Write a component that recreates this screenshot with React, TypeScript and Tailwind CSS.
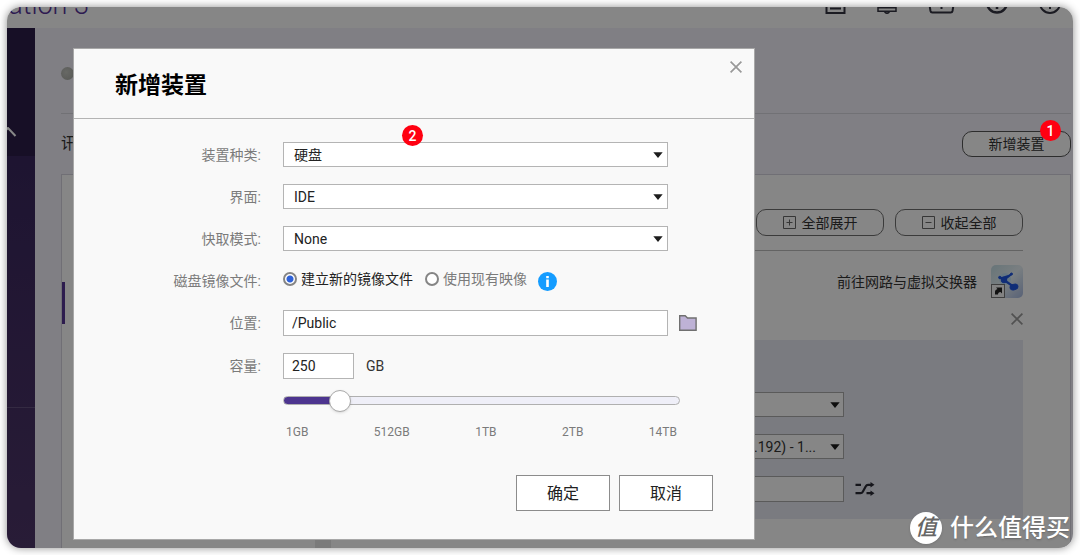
import React, { useState } from 'react';

const Caret: React.FC<{ className?: string }> = ({ className = '' }) => (
  <svg className={`pointer-events-none absolute ${className}`} width="10" height="6" viewBox="0 0 10 6" aria-hidden="true">
    <path d="M0.3 0.3h9.4L5 6z" fill="#1c1c1c" />
  </svg>
);

const CloseIcon: React.FC = () => (
  <svg width="12" height="12" viewBox="0 0 12 12" fill="none" stroke="currentColor" strokeWidth="1.7" aria-hidden="true">
    <path d="M0.6 0.6l10.8 10.8M11.4 0.6L0.6 11.4" />
  </svg>
);

const Badge: React.FC<{ value: number; className: string }> = ({ value, className }) => (
  <span className={`absolute z-10 flex size-[21px] items-center justify-center rounded-full bg-[#ff0011] text-[14px] leading-none font-medium text-white ${className}`}>
    {value}
  </span>
);

interface SelectRowProps {
  id: string;
  label: string;
  options: string[];
}

const SelectRow: React.FC<SelectRowProps> = ({ id, label, options }) => (
  <div className="flex h-[25px] items-center">
    <label htmlFor={id} className="mr-[22px] w-[187px] text-right text-[#7b7b7b]">{label}</label>
    <div className="relative w-[385px]">
      <select id={id} className="block h-[25px] w-full appearance-none border border-[#b4b4b4] bg-white pl-[10px] text-[#222] outline-none">
        {options.map((o) => (
          <option key={o}>{o}</option>
        ))}
      </select>
      <Caret className="top-[10px] right-[5px]" />
    </div>
  </div>
);

const TopBar: React.FC = () => (
  <header className="flex h-[21px] shrink-0 items-end justify-between bg-[#fdfdfd] pr-3">
    <div className="flex w-[82px] justify-end pb-[8px]">
      <h1 className="text-[27px] leading-[30px] font-light whitespace-nowrap text-[#553399]">ation 3</h1>
    </div>
    <div className="flex items-end gap-[31px] pb-[14px] text-[#333340]">
      <svg width="21" height="20" viewBox="0 0 21 20" fill="none" stroke="currentColor" strokeWidth="2">
        <path d="M1.5 1h18v18h-18zM5 6h11M5 10h11M5 14.500h11" />
      </svg>
      <svg width="20" height="20" viewBox="0 0 20 20" fill="none" stroke="currentColor" strokeWidth="1.500">
        <path d="M4 14V8a6 6 0 0 1 12 0v6M1 13.800h18v3.400H1zM7.500 17.500q2.500 3.600 5 0" />
      </svg>
      <svg width="27" height="20" viewBox="0 0 27 20" fill="none" stroke="currentColor" strokeWidth="2">
        <path d="M1 8l1.500 9q.3 1.500 1.800 1.500h18.400q1.500 0 1.800-1.500L26 8zM13.500 9v6" />
      </svg>
      <svg width="22" height="20" viewBox="0 0 22 20" fill="none" stroke="currentColor" strokeWidth="2.500">
        <circle cx="11" cy="8.500" r="10" />
        <path d="M11 9v6" />
      </svg>
      <svg width="22" height="20" viewBox="0 0 22 20" fill="none" stroke="currentColor" strokeWidth="2">
        <circle cx="11" cy="9" r="10" />
        <path d="M11 9v6" />
      </svg>
    </div>
  </header>
);

const NetworkIcon: React.FC = () => (
  <svg width="32" height="33" viewBox="0 0 32 33" aria-hidden="true">
    <defs>
      <linearGradient id="net" x1="0" y1="0" x2="1" y2="1">
        <stop offset="0" stopColor="#c4dce4" />
        <stop offset="0.5" stopColor="#e6f0f4" />
        <stop offset="1" stopColor="#a6b8e0" />
      </linearGradient>
    </defs>
    <rect width="32" height="33" rx="5" fill="url(#net)" />
    <circle cx="14" cy="14" r="6" fill="#c4e2f4" />
    <g stroke="#1f55e0" fill="#1f55e0">
      <path d="M9 12.500l4 2.500 7.500-6M13 15l10 7" strokeWidth="2.200" />
      <circle cx="13" cy="15" r="2.800" />
      <circle cx="20.500" cy="9" r="1" />
      <circle cx="8.800" cy="12.500" r="1.200" />
      <ellipse cx="23" cy="22" rx="4" ry="2.800" transform="rotate(-20 23 22)" />
    </g>
    <rect x="0.500" y="19.500" width="13" height="13" fill="#f6f6f6" stroke="#777" />
    <path d="M4 29.500v-3q0-2 2.500-2.500l-1.500-1.500h6v6l-1.500-1.500Q7 27 7 29.500z" fill="#222" />
  </svg>
);

const Details: React.FC = () => (
  <section className="min-w-0 flex-1 pt-[34px] pr-[47px]">
    <div className="flex justify-end gap-[11px]">
      <button className="flex h-[27px] w-32 items-center justify-center gap-[6px] rounded-[10px] border border-[#707070]">
        <svg width="13" height="13" viewBox="0 0 13 13" fill="none" stroke="#666">
          <path d="M0.500 0.500h12v12h-12zM3.500 6.500h6M6.500 3.500v6" />
        </svg>
        全部展开
      </button>
      <button className="flex h-[27px] w-32 items-center justify-center gap-[6px] rounded-[10px] border border-[#707070]">
        <svg width="13" height="13" viewBox="0 0 13 13" fill="none" stroke="#666">
          <path d="M0.500 0.500h12v12h-12zM3.500 6.500h6" />
        </svg>
        收起全部
      </button>
    </div>
    <div className="mt-[14px] flex items-center justify-end gap-[14px] border-t border-[#bbb] pt-[14px]">
      <a href="#network">前往网路与虚拟交换器</a>
      <NetworkIcon />
    </div>
    <div className="mt-[15px] flex justify-end">
      <button aria-label="移除" className="text-[#999]"><CloseIcon /></button>
    </div>
    <div className="mt-[15px] ml-6 flex flex-col gap-[17px] bg-[#e6e8f1] pt-[52px] pb-[17px] pl-[250px]">
      <div className="relative w-[239px]">
        <select aria-label="网路" className="block h-[25px] w-full appearance-none border border-[#aaa] bg-[#fdfdfd]" />
        <Caret className="top-[10px] right-1" />
      </div>
      <div className="relative w-[239px]">
        <select aria-label="虚拟交换器" className="block h-[25px] w-full appearance-none border border-[#aaa] bg-[#fdfdfd] pr-[27px] text-right">
          <option>.192) - 1...</option>
        </select>
        <Caret className="top-[10px] right-1" />
      </div>
      <div className="flex items-center gap-[11px]">
        <input aria-label="MAC" className="h-[26px] w-[239px] border border-[#aaa] bg-[#fdfdfd]" />
        <button aria-label="随机">
          <svg width="20" height="14" viewBox="0 0 20 14" fill="none" stroke="#2a2a35" strokeWidth="2.200">
            <path d="M0.500 2.800h5.500M0.500 11.200h5q1.500 0 2.300-1.500l3-5.500q.7-1.400 2.200-1.400h4M11.500 11.200h5.500" />
            <path d="M15.500 0v5.600l4-2.800zM15.500 8.400V14l4-2.800z" fill="#2a2a35" stroke="none" />
          </svg>
        </button>
      </div>
    </div>
  </section>
);

const AddDeviceDialog: React.FC = () => {
  const [mode, setMode] = useState('new');
  const [size, setSize] = useState(12);
  const radio =
    'size-[14px] appearance-none rounded-full border-2 border-[#858585] bg-white checked:bg-[radial-gradient(circle,#2f62d8_0_3px,#fff_4px)]';

  return (
    <div role="dialog" aria-labelledby="dialog-title" className="relative w-[682px] border border-[#a8a8a8] bg-[#f9f9f9]">
      <div className="flex h-[70px] items-center border-b border-[#b4b4b4] pl-[41px]">
        <h2 id="dialog-title" className="pt-1 text-[23px] font-bold text-black">新增装置</h2>
        <button aria-label="关闭" className="mr-[12px] mb-[33px] ml-auto text-[#999]"><CloseIcon /></button>
      </div>
      <Badge value={2} className="top-[76px] left-[328px]" />

      <div className="pt-[23px]">
        <div className="flex flex-col gap-[17px]">
          <SelectRow id="kind" label="装置种类:" options={['硬盘']} />
          <SelectRow id="bus" label="界面:" options={['IDE']} />
          <SelectRow id="cache" label="快取模式:" options={['None']} />
        </div>

        <div className="mt-[17px] mb-4 flex h-[26px] items-center">
          <span className="mr-[22px] w-[187px] text-right text-[#7b7b7b]">磁盘镜像文件:</span>
          <label className="mb-1 flex items-center gap-1 text-[#222]">
            <input type="radio" name="image" className={radio} checked={mode === 'new'} onChange={() => setMode('new')} />
            建立新的镜像文件
          </label>
          <label className="mb-1 ml-3 flex items-center gap-1 text-[#7b7b7b]">
            <input type="radio" name="image" className={radio} checked={mode === 'old'} onChange={() => setMode('old')} />
            使用现有映像
          </label>
          <svg className="ml-[11px]" width="19" height="19" viewBox="0 0 19 19" aria-hidden="true">
            <circle cx="9.500" cy="9.500" r="9.500" fill="#149cff" />
            <path d="M8.200 4h2.600v2.200H8.200zM8.200 7.400h2.600V15H8.200z" fill="#fff" />
          </svg>
        </div>

        <div className="mb-[17px] flex h-[26px] items-center">
          <label htmlFor="path" className="mr-[22px] w-[187px] text-right text-[#7b7b7b]">位置:</label>
          <input id="path" defaultValue="/Public" className="h-[26px] w-[385px] border border-[#b4b4b4] bg-white px-2 text-[#222]" />
          <button aria-label="浏览" className="ml-[11px]">
            <svg width="18" height="16" viewBox="0 0 18 16">
              <path d="M0.700 0.700h5.500l2.300 2.300h8.600v12.300H0.700z" fill="#beb2d6" stroke="#707070" strokeWidth="1.400" />
            </svg>
          </button>
        </div>

        <div className="flex h-[26px] items-center">
          <label htmlFor="capacity" className="mr-[22px] w-[187px] text-right text-[#7b7b7b]">容量:</label>
          <input id="capacity" defaultValue="250" className="h-[26px] w-[71px] border border-[#b4b4b4] bg-white px-2 text-[#222]" />
          <span className="ml-3 text-[#333]">GB</span>
        </div>

        <div className="mt-[17px] ml-[209px] w-[397px]">
          <input
            type="range"
            aria-label="容量"
            min={0}
            max={100}
            value={size}
            onChange={(e) => setSize(Number(e.target.value))}
            style={{ backgroundImage: `linear-gradient(to right, #4d358f ${size + 2}%, #efeff8 ${size + 2}%)` }}
            className="block h-[9px] w-full appearance-none rounded-full border border-[#b0b0b0] [&::-webkit-slider-thumb]:size-[22px] [&::-webkit-slider-thumb]:appearance-none [&::-webkit-slider-thumb]:rounded-full [&::-webkit-slider-thumb]:border [&::-webkit-slider-thumb]:border-[#aaa] [&::-webkit-slider-thumb]:bg-white [&::-webkit-slider-thumb]:shadow"
          />
          <div className="mt-[18px] flex justify-between px-[3px] text-[12px] leading-[18px] text-[#7b7b7b]">
            {['1GB', '512GB', '1TB', '2TB', '14TB'].map((t) => (
              <span key={t}>{t}</span>
            ))}
          </div>
        </div>
      </div>

      <div className="mt-[34px] flex justify-end gap-[9px] pr-[41px] pb-[28px] text-[16px] text-[#222]">
        <button className="h-9 w-[94px] border border-[#8c8c8c] bg-white pt-[2px]">确定</button>
        <button className="h-9 w-[94px] border border-[#8c8c8c] bg-white pt-[2px]">取消</button>
      </div>
    </div>
  );
};

const App: React.FC = () => {
  return (
    <div className="h-screen bg-white p-[7px] font-['Roboto','Noto_Sans_CJK_SC',sans-serif] text-[14px] leading-5 text-[#333]">
      <div className="relative flex h-full flex-col overflow-hidden rounded-[14px] shadow-[0_0_8px_rgba(0,0,0,0.45)]">
        <TopBar />
        <div className="flex min-h-0 flex-1">
          <aside className="flex w-7 shrink-0 flex-col bg-linear-to-b from-[#33225a] to-[#4d3568]">
            <div className="h-[128px] bg-[#2c1d48] pt-[99px]">
              <svg width="10" height="10" viewBox="0 0 10 10" fill="none" stroke="#fff" strokeWidth="2">
                <path d="M-6 8L1 1l7.500 8" />
              </svg>
            </div>
            <div className="h-[252px] border-b border-[#62507e]"></div>
          </aside>

          <main className="flex min-w-0 flex-1 flex-col bg-[#f1f0f9] pr-[2px] pl-[26px]">
            <div className="h-[86px] shrink-0 border-b border-[#d6d5de] pt-[39px]">
              <div className="size-[13px] rounded-full bg-[radial-gradient(circle_at_40%_40%,#c4c6c0,#a2a49e)]"></div>
            </div>
            <div className="flex h-[60px] shrink-0 items-center justify-between">
              <h2 className="text-[16px]">讯</h2>
              <button className="h-[26px] w-[109px] rounded-[10px] border border-[#555] bg-[#fdfdfd]">新增装置</button>
            </div>
            <div className="flex min-h-0 flex-1 overflow-hidden border border-b-0 border-[#d4d2de] bg-[#fdfdfd]">
              <div className="w-[253px] shrink-0 pt-[107px]">
                <div className="h-[42px] w-[3px] bg-[#563594]"></div>
              </div>
              <div className="w-4 shrink-0 bg-[#e6e6e6]"></div>
              <Details />
            </div>
          </main>
        </div>

        {/* Overlay with dialog */}
        <div className="absolute inset-0 flex items-start bg-black/47 pt-[41px] pl-[66px]">
          <AddDeviceDialog />
        </div>

        <Badge value={1} className="top-[113px] right-3" />

        <div className="absolute right-[3px] bottom-1 flex items-center gap-[8px] text-white">
          <span className="flex size-8 items-center justify-center rounded-full bg-white text-[22px] font-medium text-[#666] italic shadow">值</span>
          <span className="text-[24px] leading-8 font-medium text-shadow-sm">什么值得买</span>
        </div>
      </div>
    </div>
  );
};

export default App;
